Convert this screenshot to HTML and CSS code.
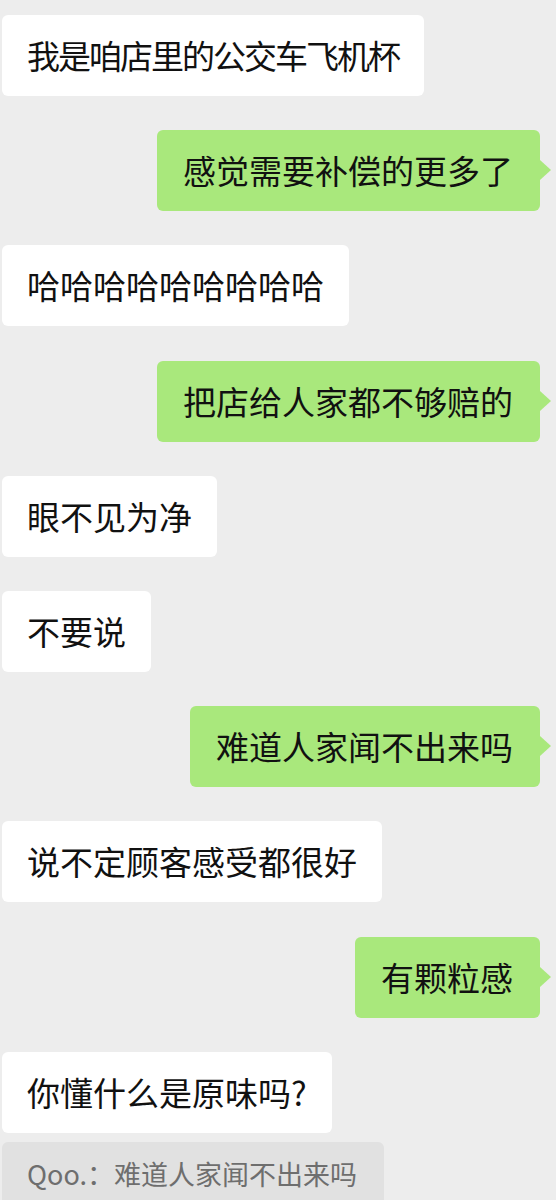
FILE: index.html
```html
<!DOCTYPE html>
<html lang="zh-CN">
<head>
<meta charset="UTF-8">
<meta name="viewport" content="width=device-width, initial-scale=1.0">
<title>聊天</title>
<link rel="stylesheet" href="styles.css">
</head>
<body>
    <div class="chat">
        <div class="row left"><div class="bubble tight">我是咱店里的公交车飞机杯</div></div>
        <div class="row right"><div class="bubble">感觉需要补偿的更多了</div></div>
        <div class="row left"><div class="bubble">哈哈哈哈哈哈哈哈哈</div></div>
        <div class="row right"><div class="bubble">把店给人家都不够赔的</div></div>
        <div class="row left"><div class="bubble">眼不见为净</div></div>
        <div class="row left"><div class="bubble">不要说</div></div>
        <div class="row right"><div class="bubble">难道人家闻不出来吗</div></div>
        <div class="row left"><div class="bubble">说不定顾客感受都很好</div></div>
        <div class="row right"><div class="bubble">有颗粒感</div></div>
        <div class="group">
            <div class="row left"><div class="bubble">你懂什么是原味吗?</div></div>
            <div class="row left"><div class="quote">Qoo.：难道人家闻不出来吗</div></div>
        </div>
    </div>
</body>
</html>
```

FILE: styles.css
```css
body {
    margin: 0;
    padding: 0;
    background-color: #ededed;
    font-family: "Noto Sans CJK SC", "Noto Sans", sans-serif;
    color: #111;
}
.chat {
    display: flex;
    flex-direction: column;
    gap: 34.2px;
    padding-top: 15px;
    height: 1200px;
    overflow: hidden;
    box-sizing: border-box;
}
.group {
    display: flex;
    flex-direction: column;
    gap: 9px;
}
.row {
    display: flex;
}
.row.left {
    justify-content: flex-start;
    padding-left: 2px;
}
.row.right {
    justify-content: flex-end;
    padding-right: 16px;
}
.bubble {
    position: relative;
    font-size: 33px;
    line-height: 45px;
    padding: 18px 25px;
    border-radius: 6px;
    background-color: #fff;
    white-space: nowrap;
}
.bubble.tight {
    letter-spacing: -2px;
}
.right .bubble {
    background-color: #a9e87c;
    padding: 18px 27px 18px 26px;
}
.right .bubble::after {
    content: "";
    position: absolute;
    right: -11px;
    top: 30px;
    border-left: 11px solid #a9e87c;
    border-top: 10px solid transparent;
    border-bottom: 10px solid transparent;
}
.quote {
    font-size: 27px;
    line-height: 36px;
    padding: 14px 27px 14px 25px;
    border-radius: 6px;
    background-color: #e1e1e1;
    color: #6e6e6e;
    white-space: nowrap;
}
```
